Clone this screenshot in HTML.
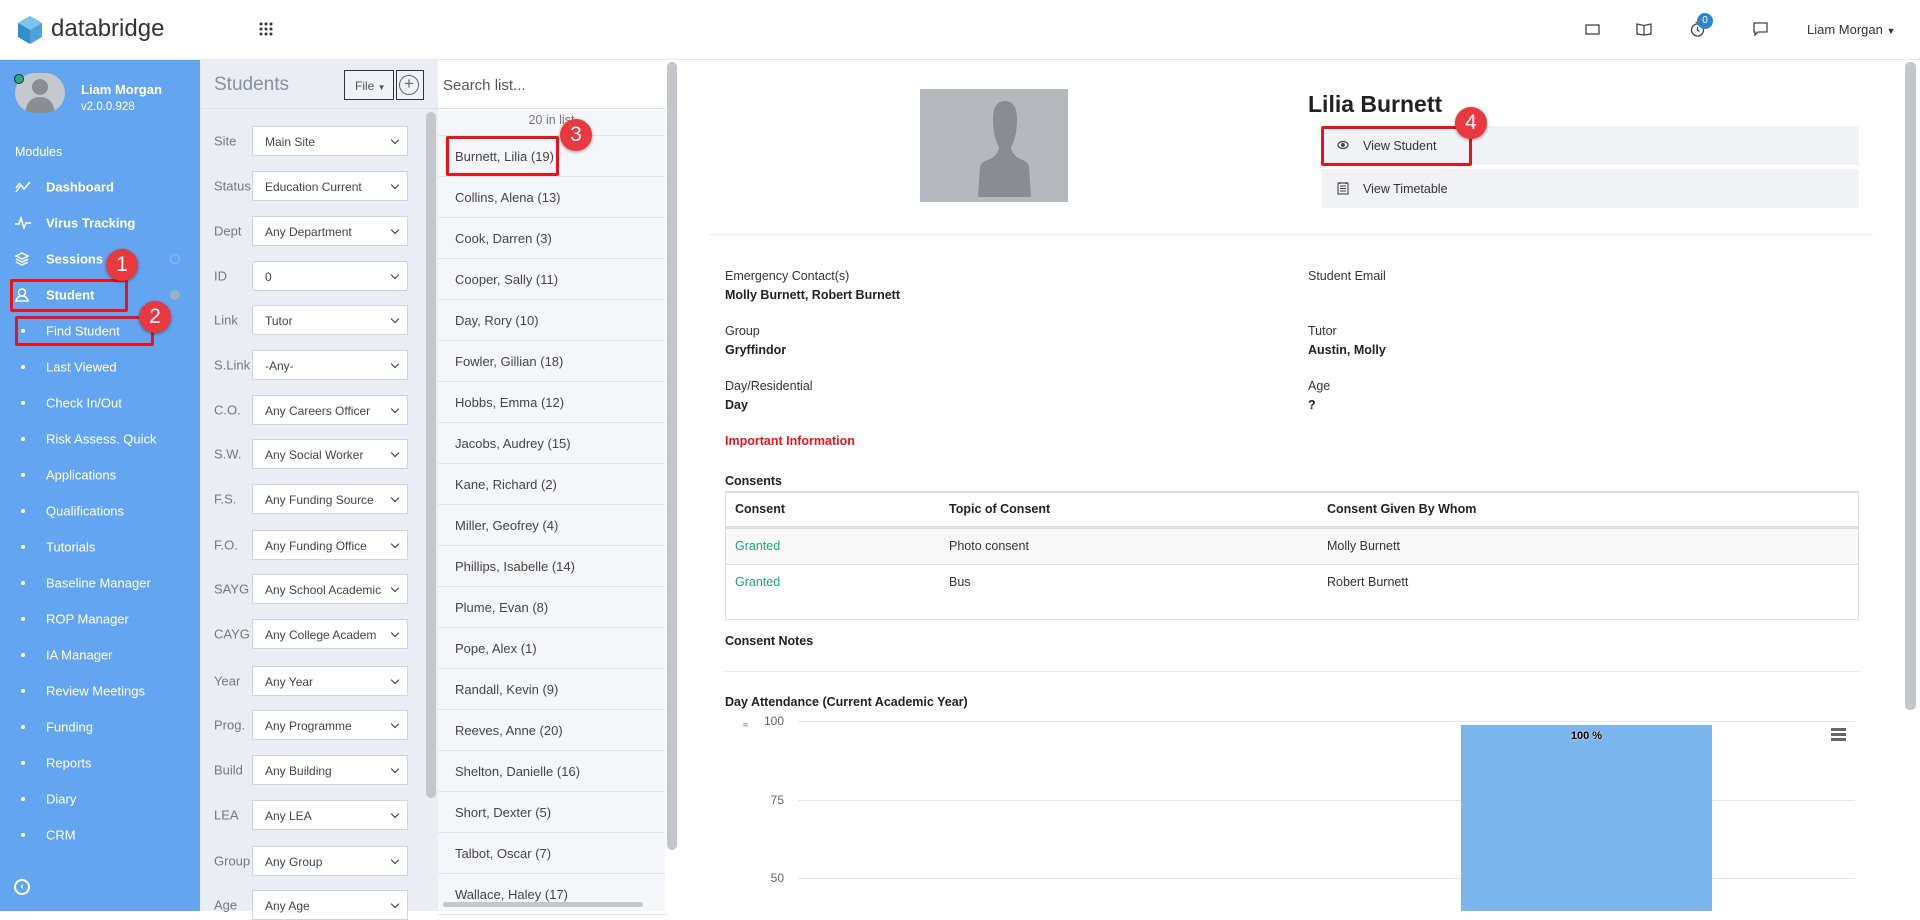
<!DOCTYPE html>
<html><head><meta charset="utf-8">
<style>
*{box-sizing:border-box;margin:0;padding:0}
body{width:1920px;height:911px;overflow:hidden;font-family:"Liberation Sans",sans-serif;background:#fff;position:relative;color:#333}
.a{position:absolute}
.hdr{left:0;top:0;width:1920px;height:60px;background:#fff;border-bottom:1px solid #e3e6ea}
.side{left:0;top:60px;width:200px;height:851px;background:#63a5f1;color:#fff}
.mi{position:absolute;left:46px;font-size:13px;font-weight:bold;transform:translateY(-50%)}
.si{position:absolute;left:46px;font-size:13px;transform:translateY(-50%)}
.dot{position:absolute;left:21px;width:4px;height:4px;border-radius:2px;background:#fff;transform:translateY(-50%)}
.filt{left:200px;top:60px;width:238px;height:851px;background:#eaeef4}
.lbl{position:absolute;left:14px;font-size:13px;color:#777;transform:translateY(-50%)}
.sel{position:absolute;left:52px;width:156px;height:30px;background:#fff;border:1px solid #cfd4da;font-size:12px;color:#444;padding:8px 0 0 12px;transform:translateY(-50%);white-space:nowrap;overflow:hidden}
.sel:after{content:"";position:absolute;right:9px;top:10px;width:5px;height:5px;border-right:1.6px solid #333;border-bottom:1.6px solid #333;transform:rotate(45deg)}
.list{left:438px;top:60px;width:229px;height:851px;background:#f4f6f9}
.row{position:absolute;left:0;width:229px;height:41px;border-bottom:1px solid #e1e5ea;font-size:13px;color:#444;padding:13px 0 0 17px}
.lab{position:absolute;font-size:12.5px;color:#333}
.val{position:absolute;font-size:12.5px;font-weight:bold;color:#222}
.box{position:absolute;border:3px solid #e8141b;border-radius:2px}
.num{position:absolute;width:32px;height:32px;border-radius:16px;background:#e9383e;color:#fff;font-size:21px;text-align:center;line-height:32px;box-shadow:0 1px 3px rgba(0,0,0,.4)}
.gl{position:absolute;left:798px;width:1057px;height:1px;background:#e4e6e9}
.yl{position:absolute;font-size:12px;color:#666;width:40px;text-align:right;left:744px}
</style></head><body>

<div class="a hdr">
  <svg class="a" style="left:18px;top:16px" width="24" height="28" viewBox="0 0 24 28"><polygon points="12,0 24,7 24,21 12,28 0,21 0,7" fill="#4aa3dd"/><polygon points="12,0 24,7 12,14 0,7" fill="#7cc4ee"/><polygon points="0,7 12,14 12,28 0,21" fill="#2f8fcf"/></svg>
  <div class="a" style="left:51px;top:15px;font-size:24px;color:#333">databridge</div>
  <svg class="a" style="left:259px;top:22px" width="14" height="14" viewBox="0 0 14 14" fill="#333"><circle cx="2" cy="2" r="1.5"/><circle cx="7" cy="2" r="1.5"/><circle cx="12" cy="2" r="1.5"/><circle cx="2" cy="7" r="1.5"/><circle cx="7" cy="7" r="1.5"/><circle cx="12" cy="7" r="1.5"/><circle cx="2" cy="12" r="1.5"/><circle cx="7" cy="12" r="1.5"/><circle cx="12" cy="12" r="1.5"/></svg>
  <svg class="a" style="left:1585px;top:23px" width="15" height="13" viewBox="0 0 15 13" fill="none" stroke="#444" stroke-width="1.3"><rect x="1" y="2" width="13" height="9"/></svg>
  <svg class="a" style="left:1636px;top:22px" width="16" height="14" viewBox="0 0 16 14" fill="none" stroke="#444" stroke-width="1.3"><path d="M1 2 L8 3.5 L15 2 V12 L8 13 L1 12 Z M8 3.5 V13"/></svg>
  <svg class="a" style="left:1690px;top:21px" width="15" height="16" viewBox="0 0 15 16" fill="none" stroke="#444" stroke-width="1.3"><circle cx="7.5" cy="9" r="6"/><path d="M7.5 6 V9 L9.5 10.5 M5.5 1.5 H9.5"/></svg>
  <div class="a" style="left:1697px;top:13px;width:16px;height:16px;border-radius:8px;background:#2a86d1;color:#fff;font-size:10px;text-align:center;line-height:16px">0</div>
  <svg class="a" style="left:1753px;top:22px" width="15" height="14" viewBox="0 0 15 14" fill="none" stroke="#444" stroke-width="1.3"><path d="M1 1 H14 V10 H5 L2 13 V10 H1 Z"/></svg>
  <div class="a" style="left:1807px;top:22px;font-size:13px;color:#333">Liam Morgan <span style="font-size:9px">▼</span></div>
</div>

<div class="a side">
  <div class="a" style="left:15px;top:13px;width:50px;height:40px;border-radius:20px;background:#c5c8cc;overflow:hidden">
    <svg width="50" height="40" viewBox="0 0 50 40"><circle cx="25" cy="14" r="8" fill="#8a8d91"/><path d="M10 40 Q12 24 25 24 Q38 24 40 40Z" fill="#8a8d91"/></svg>
  </div>
  <div class="a" style="left:14px;top:14px;width:10px;height:10px;border-radius:5px;background:#20b27a;border:1.5px solid #222"></div>
  <div class="a" style="left:81px;top:22px;font-size:13px;font-weight:bold">Liam Morgan</div>
  <div class="a" style="left:81px;top:41px;font-size:11.5px">v2.0.0.928</div>
  <div class="a" style="left:15px;top:85px;font-size:12.5px">Modules</div>
  <svg class="a" style="left:15px;top:120px" width="16" height="14" viewBox="0 0 16 14" fill="none" stroke="#fff" stroke-width="1.5"><path d="M1 12 L6 5 L9 9 L15 2 M1 8 L5 3"/></svg>
  <div class="mi" style="top:127px">Dashboard</div>
  <svg class="a" style="left:15px;top:156px" width="16" height="14" viewBox="0 0 16 14" fill="none" stroke="#fff" stroke-width="1.5"><path d="M0 8 H4 L6 2 L9 12 L11 7 H16"/></svg>
  <div class="mi" style="top:163px">Virus Tracking</div>
  <svg class="a" style="left:15px;top:192px" width="14" height="14" viewBox="0 0 14 14" fill="none" stroke="#fff" stroke-width="1.5"><path d="M7 1 L13 4 L7 7 L1 4Z M1 7 L7 10 L13 7 M1 10 L7 13 L13 10"/></svg>
  <div class="mi" style="top:199px">Sessions</div>
  <div class="a" style="left:170px;top:194px;width:10px;height:10px;border-radius:5px;border:1px solid #8fbef4"></div>
  <svg class="a" style="left:15px;top:228px" width="14" height="14" viewBox="0 0 14 14" fill="none" stroke="#fff" stroke-width="1.5"><circle cx="7" cy="4.5" r="3.5"/><path d="M1 13 Q2 8 7 8 Q12 8 13 13Z"/></svg>
  <div class="mi" style="top:235px">Student</div>
  <div class="a" style="left:170px;top:230px;width:10px;height:10px;border-radius:5px;background:#9ab0c8"></div>
  <div class="dot" style="top:271px"></div><div class="si" style="top:271px">Find Student</div>
  <div class="dot" style="top:307px"></div><div class="si" style="top:307px">Last Viewed</div>
  <div class="dot" style="top:343px"></div><div class="si" style="top:343px">Check In/Out</div>
  <div class="dot" style="top:379px"></div><div class="si" style="top:379px">Risk Assess. Quick</div>
  <div class="dot" style="top:415px"></div><div class="si" style="top:415px">Applications</div>
  <div class="dot" style="top:451px"></div><div class="si" style="top:451px">Qualifications</div>
  <div class="dot" style="top:487px"></div><div class="si" style="top:487px">Tutorials</div>
  <div class="dot" style="top:523px"></div><div class="si" style="top:523px">Baseline Manager</div>
  <div class="dot" style="top:559px"></div><div class="si" style="top:559px">ROP Manager</div>
  <div class="dot" style="top:595px"></div><div class="si" style="top:595px">IA Manager</div>
  <div class="dot" style="top:631px"></div><div class="si" style="top:631px">Review Meetings</div>
  <div class="dot" style="top:667px"></div><div class="si" style="top:667px">Funding</div>
  <div class="dot" style="top:703px"></div><div class="si" style="top:703px">Reports</div>
  <div class="dot" style="top:739px"></div><div class="si" style="top:739px">Diary</div>
  <div class="dot" style="top:775px"></div><div class="si" style="top:775px">CRM</div>
  <div class="a" style="left:14px;top:819px;width:16px;height:16px;border-radius:8px;border:2px solid #fff;font-size:10px;line-height:12px;text-align:center;font-weight:bold">&lsaquo;</div>
</div>

<div class="a filt">
  <div class="a" style="left:0;top:0;width:238px;height:49px;border-bottom:1px solid #dde2e8"></div>
  <div class="a" style="left:14px;top:14px;font-size:19px;color:#8a9099">Students</div>
  <div class="a" style="left:144px;top:10px;width:50px;height:30px;border:1px solid #333;background:#eef1f5;font-size:12px;color:#555;padding:8px 0 0 10px">File <span style="font-size:8px">▼</span></div>
  <div class="a" style="left:196px;top:10px;width:28px;height:30px;border:1px solid #333;background:#eef1f5"><div style="margin:4px 0 0 2px;width:20px;height:20px;border-radius:10px;border:1.5px solid #666;text-align:center;line-height:16px;font-size:17px;color:#666">+</div></div>
  <div class="a" style="left:226px;top:52px;width:10px;height:686px;border-radius:5px;background:#c3c6ca"></div>
  <div class="lbl" style="top:81px">Site</div><div class="sel" style="top:81px">Main Site</div>
  <div class="lbl" style="top:126px">Status</div><div class="sel" style="top:126px">Education Current</div>
  <div class="lbl" style="top:171px">Dept</div><div class="sel" style="top:171px">Any Department</div>
  <div class="lbl" style="top:216px">ID</div><div class="sel" style="top:216px;border-radius:2px">0</div>
  <div class="lbl" style="top:260px">Link</div><div class="sel" style="top:260px">Tutor</div>
  <div class="lbl" style="top:305px">S.Link</div><div class="sel" style="top:305px">-Any-</div>
  <div class="lbl" style="top:350px">C.O.</div><div class="sel" style="top:350px">Any Careers Officer</div>
  <div class="lbl" style="top:394px">S.W.</div><div class="sel" style="top:394px">Any Social Worker</div>
  <div class="lbl" style="top:439px">F.S.</div><div class="sel" style="top:439px">Any Funding Source</div>
  <div class="lbl" style="top:485px">F.O.</div><div class="sel" style="top:485px">Any Funding Office</div>
  <div class="lbl" style="top:529px">SAYG</div><div class="sel" style="top:529px">Any School Academic</div>
  <div class="lbl" style="top:574px">CAYG</div><div class="sel" style="top:574px">Any College Academ</div>
  <div class="lbl" style="top:621px">Year</div><div class="sel" style="top:621px">Any Year</div>
  <div class="lbl" style="top:665px">Prog.</div><div class="sel" style="top:665px">Any Programme</div>
  <div class="lbl" style="top:710px">Build</div><div class="sel" style="top:710px">Any Building</div>
  <div class="lbl" style="top:755px">LEA</div><div class="sel" style="top:755px">Any LEA</div>
  <div class="lbl" style="top:801px">Group</div><div class="sel" style="top:801px">Any Group</div>
  <div class="lbl" style="top:845px">Age</div><div class="sel" style="top:845px">Any Age</div>
</div>

<div class="a list">
  <div class="a" style="left:0;top:0;width:227px;height:49px;background:#fff;border-bottom:1px solid #dde2e8"></div>
  <div class="a" style="left:5px;top:17px;font-size:15px;color:#555">Search list...</div>
  <div class="a" style="left:0;top:53px;width:227px;text-align:center;font-size:12.5px;color:#777">20 in list</div>
  <div class="a" style="left:0;top:75px;width:227px;border-top:1px solid #e1e5ea"></div>
  <div class="row" style="top:76px">Burnett, Lilia (19)</div>
  <div class="row" style="top:117px">Collins, Alena (13)</div>
  <div class="row" style="top:158px">Cook, Darren (3)</div>
  <div class="row" style="top:199px">Cooper, Sally (11)</div>
  <div class="row" style="top:240px">Day, Rory (10)</div>
  <div class="row" style="top:281px">Fowler, Gillian (18)</div>
  <div class="row" style="top:322px">Hobbs, Emma (12)</div>
  <div class="row" style="top:363px">Jacobs, Audrey (15)</div>
  <div class="row" style="top:404px">Kane, Richard (2)</div>
  <div class="row" style="top:445px">Miller, Geofrey (4)</div>
  <div class="row" style="top:486px">Phillips, Isabelle (14)</div>
  <div class="row" style="top:527px">Plume, Evan (8)</div>
  <div class="row" style="top:568px">Pope, Alex (1)</div>
  <div class="row" style="top:609px">Randall, Kevin (9)</div>
  <div class="row" style="top:650px">Reeves, Anne (20)</div>
  <div class="row" style="top:691px">Shelton, Danielle (16)</div>
  <div class="row" style="top:732px">Short, Dexter (5)</div>
  <div class="row" style="top:773px">Talbot, Oscar (7)</div>
  <div class="row" style="top:814px">Wallace, Haley (17)</div>
  <div class="a" style="left:227px;top:0;width:2px;height:851px;background:#fff"></div>
  <div class="a" style="left:5px;top:842px;width:200px;height:5px;border-radius:3px;background:#c3c6ca"></div>
</div>
<div class="a" style="left:667px;top:62px;width:10px;height:788px;border-radius:5px;background:#c3c6ca"></div>

<div class="a" style="left:920px;top:89px;width:148px;height:113px;background:#b5b8bc">
  <svg width="148" height="113" viewBox="0 0 148 113"><path d="M58 108 L60 78 Q62 72 70 70 Q78 66 79 58 Q73 48 73 30 Q73 12 85 12 Q97 12 97 30 Q97 48 91 58 Q92 66 100 70 Q108 72 109 78 L111 108Z" fill="#898c90"/></svg>
</div>
<div class="a" style="left:1308px;top:91px;font-size:23px;font-weight:bold;color:#222">Lilia Burnett</div>
<div class="a" style="left:1322px;top:126px;width:537px;height:39px;background:#f1f2f5"></div>
<div class="a" style="left:1322px;top:169px;width:537px;height:39px;background:#f1f2f5"></div>
<svg class="a" style="left:1337px;top:140px" width="12" height="10" viewBox="0 0 12 10" fill="none" stroke="#444" stroke-width="1.2"><ellipse cx="6" cy="5" rx="5" ry="3.5"/><circle cx="6" cy="5" r="1.4" fill="#444"/></svg>
<div class="a" style="left:1363px;top:139px;font-size:12.5px;color:#333">View Student</div>
<svg class="a" style="left:1337px;top:181px" width="12" height="14" viewBox="0 0 12 14" fill="none" stroke="#444" stroke-width="1.1"><rect x="1" y="2" width="10" height="11"/><path d="M3 5H9M3 7.5H9M3 10H9M3 1V3M9 1V3"/></svg>
<div class="a" style="left:1363px;top:182px;font-size:12.5px;color:#333">View Timetable</div>
<div class="a" style="left:710px;top:234px;width:1163px;height:1px;background:#e6e8eb"></div>

<div class="lab" style="left:725px;top:269px">Emergency Contact(s)</div>
<div class="val" style="left:725px;top:288px">Molly Burnett, Robert Burnett</div>
<div class="lab" style="left:1308px;top:269px">Student Email</div>
<div class="lab" style="left:725px;top:324px">Group</div>
<div class="val" style="left:725px;top:343px">Gryffindor</div>
<div class="lab" style="left:1308px;top:324px">Tutor</div>
<div class="val" style="left:1308px;top:343px">Austin, Molly</div>
<div class="lab" style="left:725px;top:379px">Day/Residential</div>
<div class="val" style="left:725px;top:398px">Day</div>
<div class="lab" style="left:1308px;top:379px">Age</div>
<div class="val" style="left:1308px;top:398px">?</div>
<div class="val" style="left:725px;top:434px;color:#e8141b">Important Information</div>
<div class="val" style="left:725px;top:474px">Consents</div>

<div class="a" style="left:725px;top:491px;width:1134px;height:129px;border:1px solid #dcdfe3;border-top:2px solid #dcdfe3"></div>
<div class="a" style="left:726px;top:526px;width:1132px;height:3px;background:#dcdfe3"></div>
<div class="a" style="left:726px;top:529px;width:1132px;height:36px;background:#f8f8f8;border-bottom:1px solid #dcdfe3"></div>
<div class="val" style="left:735px;top:502px">Consent</div>
<div class="val" style="left:949px;top:502px">Topic of Consent</div>
<div class="val" style="left:1327px;top:502px">Consent Given By Whom</div>
<div class="lab" style="left:735px;top:539px;color:#1fa37a">Granted</div>
<div class="lab" style="left:949px;top:539px">Photo consent</div>
<div class="lab" style="left:1327px;top:539px">Molly Burnett</div>
<div class="lab" style="left:735px;top:575px;color:#1fa37a">Granted</div>
<div class="lab" style="left:949px;top:575px">Bus</div>
<div class="lab" style="left:1327px;top:575px">Robert Burnett</div>
<div class="val" style="left:725px;top:634px">Consent Notes</div>
<div class="a" style="left:725px;top:671px;width:1134px;height:1px;background:#e6e8eb"></div>
<div class="val" style="left:725px;top:695px">Day Attendance (Current Academic Year)</div>

<div class="gl" style="top:721px"></div>
<div class="gl" style="top:800px"></div>
<div class="gl" style="top:878px"></div>
<div class="yl" style="top:714px">100</div>
<div class="yl" style="top:793px">75</div>
<div class="yl" style="top:871px">50</div>
<div class="a" style="left:743px;top:720px;font-size:10px;color:#666">≈</div>
<div class="a" style="left:1461px;top:725px;width:251px;height:186px;background:#7cb5ec"></div>
<div class="a" style="left:1461px;top:730px;width:251px;text-align:center;font-size:11px;font-weight:bold;color:#000;text-shadow:0 0 2px #fff">100 %</div>
<div class="a" style="left:1831px;top:728px;width:15px;height:3px;background:#666;box-shadow:0 5px 0 #666,0 10px 0 #666"></div>
<div class="a" style="left:1905px;top:62px;width:11px;height:648px;border-radius:5px;background:#c3c6ca"></div>

<div class="box" style="left:10px;top:279px;width:118px;height:33px"></div>
<div class="num" style="left:106px;top:249px">1</div>
<div class="box" style="left:15px;top:316px;width:139px;height:30px"></div>
<div class="num" style="left:139px;top:301px">2</div>
<div class="box" style="left:446px;top:136px;width:113px;height:40px"></div>
<div class="num" style="left:560px;top:119px">3</div>
<div class="box" style="left:1321px;top:126px;width:151px;height:40px"></div>
<div class="num" style="left:1455px;top:107px">4</div>
</body></html>
